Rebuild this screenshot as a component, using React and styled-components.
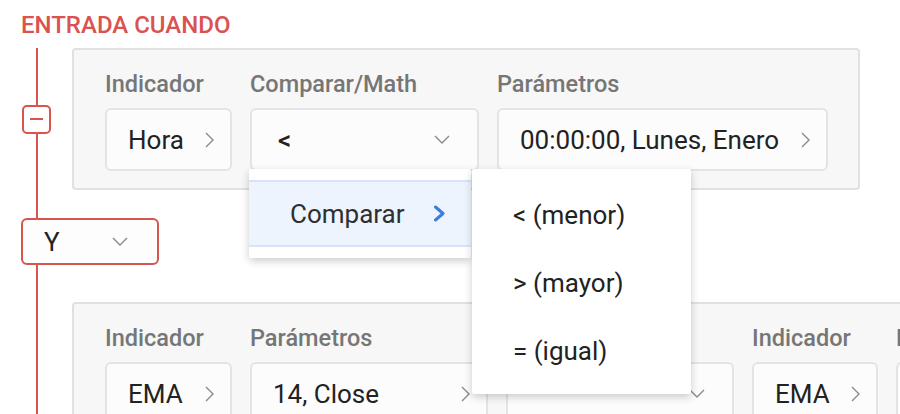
import React from "react";
import styled, { createGlobalStyle } from "styled-components";

const RED = "#d9534f";

const GlobalStyle = createGlobalStyle`
  html, body {
    margin: 0;
    background: #ffffff;
    overflow: hidden;
  }
  body {
    width: 900px;
    height: 414px;
    font-family: Roboto, "Liberation Sans", sans-serif;
  }
`;

function ChevronRight() {
  return (
    <svg width="9" height="16" viewBox="0 0 9 16">
      <polyline points="1,1 8,8 1,15" fill="none" stroke="#8a8a8a" strokeWidth="1.4" />
    </svg>
  );
}

function ChevronDown() {
  return (
    <svg width="16" height="9" viewBox="0 0 16 9">
      <polyline points="1,1 8,8 15,1" fill="none" stroke="#8a8a8a" strokeWidth="1.4" />
    </svg>
  );
}

function ChevronBlue() {
  return (
    <svg width="13" height="17" viewBox="0 0 13 17">
      <polyline points="2.5,2 10,8.5 2.5,15" fill="none" stroke="#3b7ce0" strokeWidth="3" strokeLinecap="round" strokeLinejoin="round" />
    </svg>
  );
}

function App() {
  return (
    <Page>
      <GlobalStyle />
      <Title>ENTRADA CUANDO</Title>
      <Tree>
        <ConditionRow>
          <ToggleSlot>
            <MinusButton />
          </ToggleSlot>
          <Card>
            <Column $width={127}>
              <Label>Indicador</Label>
              <Field $padRight={16}>
                Hora
                <IconWrap><ChevronRight /></IconWrap>
              </Field>
            </Column>
            <Column $width={229}>
              <Label>Comparar/Math</Label>
              <Field $padRight={27}>
                <Operator>&lt;</Operator>
                <IconWrap><ChevronDown /></IconWrap>
                <Menu>
                  <ActiveItem>
                    Comparar
                    <IconWrap><ChevronBlue /></IconWrap>
                  </ActiveItem>
                </Menu>
                <SubMenu>
                  <MenuItem>&lt; (menor)</MenuItem>
                  <MenuItem>&gt; (mayor)</MenuItem>
                  <MenuItem>= (igual)</MenuItem>
                </SubMenu>
              </Field>
            </Column>
            <Column $width={331}>
              <Label>Parámetros</Label>
              <Field $padRight={16}>
                00:00:00, Lunes, Enero
                <IconWrap><ChevronRight /></IconWrap>
              </Field>
            </Column>
          </Card>
        </ConditionRow>

        <LogicSelect>
          Y
          <IconWrap><ChevronDown /></IconWrap>
        </LogicSelect>

        <ConditionRow>
          <ToggleSlot />
          <Card>
            <Column $width={127}>
              <Label>Indicador</Label>
              <Field $padRight={16}>
                EMA
                <IconWrap><ChevronRight /></IconWrap>
              </Field>
            </Column>
            <Column $width={238}>
              <Label>Parámetros</Label>
              <Field $padRight={16}>
                14, Close
                <IconWrap><ChevronRight /></IconWrap>
              </Field>
            </Column>
            <Column $width={228}>
              <Label>Comparar/Math</Label>
              <Field $padRight={27}>
                <IconWrap><ChevronDown /></IconWrap>
              </Field>
            </Column>
            <Column $width={126}>
              <Label>Indicador</Label>
              <Field $padRight={16}>
                EMA
                <IconWrap><ChevronRight /></IconWrap>
              </Field>
            </Column>
            <Column $width={238}>
              <Label>Parámetros</Label>
              <Field $padRight={16}>
                21, Close
                <IconWrap><ChevronRight /></IconWrap>
              </Field>
            </Column>
          </Card>
        </ConditionRow>
      </Tree>
    </Page>
  );
}

const Page = styled.div`
  padding-top: 11px;
`;

const Title = styled.div`
  margin-left: 21px;
  font-size: 24px;
  line-height: 28px;
  font-weight: 500;
  color: ${RED};
  margin-bottom: 9px;
`;

const Tree = styled.div`
  position: relative;
  height: 400px;

  &::before {
    content: "";
    position: absolute;
    left: 36px;
    top: 0;
    bottom: 0;
    width: 2px;
    background: ${RED};
  }
`;

const ConditionRow = styled.div`
  display: flex;
  align-items: center;
`;

const ToggleSlot = styled.div`
  width: 72px;
  flex: none;
  padding-left: 22px;
  box-sizing: border-box;
  display: flex;
`;

const MinusButton = styled.div`
  position: relative;
  width: 29px;
  height: 29px;
  box-sizing: border-box;
  border: 2px solid ${RED};
  border-radius: 5px;
  background: #ffffff;
  display: flex;
  align-items: center;
  justify-content: center;

  &::after {
    content: "";
    width: 13px;
    height: 2px;
    background: ${RED};
  }
`;

const Card = styled.div`
  flex: none;
  display: flex;
  gap: 18px;
  padding: 20px 30px 17px 31px;
  border: 2px solid #e1e1e1;
  border-radius: 4px;
  background: #f7f7f7;
`;

const Column = styled.div`
  width: ${(p) => p.$width}px;
  flex: none;
  display: flex;
  flex-direction: column;
  gap: 10px;
`;

const Label = styled.div`
  font-size: 23.5px;
  line-height: 28px;
  font-weight: 500;
  color: #767676;
  white-space: nowrap;
`;

const Field = styled.div`
  position: relative;
  height: 63px;
  box-sizing: border-box;
  display: flex;
  align-items: center;
  padding: 0 ${(p) => p.$padRight}px 0 21px;
  border: 2px solid #e4e4e4;
  border-radius: 6px;
  background: #fcfcfc;
  font-size: 26px;
  color: #222222;
  white-space: nowrap;
`;

const Operator = styled.span`
  margin-left: 5px;
  font-weight: 500;
`;

const IconWrap = styled.span`
  margin-left: auto;
  display: flex;
  align-items: center;
`;

const Menu = styled.div`
  position: absolute;
  z-index: 10;
  left: -3px;
  top: 59px;
  width: 222px;
  box-sizing: border-box;
  padding: 11px 0;
  background: #ffffff;
  border-radius: 2px;
  box-shadow: 0 3px 9px rgba(0, 0, 0, 0.2);
`;

const ActiveItem = styled.div`
  height: 67px;
  box-sizing: border-box;
  display: flex;
  align-items: center;
  padding: 0 25px 0 41px;
  background: #edf4fe;
  border-top: 2px solid #d7e4f8;
  border-bottom: 2px solid #d7e4f8;
  font-size: 26px;
  color: #2f2f2f;
`;

const SubMenu = styled.div`
  position: absolute;
  z-index: 11;
  left: 220px;
  top: 59px;
  width: 219px;
  box-sizing: border-box;
  padding: 12px 0 9px;
  background: #ffffff;
  border-radius: 2px;
  box-shadow: 0 3px 9px rgba(0, 0, 0, 0.2);
`;

const MenuItem = styled.div`
  height: 68px;
  display: flex;
  align-items: center;
  padding-left: 41px;
  font-size: 26px;
  color: #222222;
`;

const LogicSelect = styled.div`
  position: relative;
  margin: 28px 0 37px 21px;
  width: 138px;
  height: 47px;
  box-sizing: border-box;
  display: flex;
  align-items: center;
  padding: 0 29px 0 21px;
  border: 2px solid ${RED};
  border-radius: 6px;
  background: #fdfdfd;
  font-size: 26px;
  color: #222222;
`;

export default App;
